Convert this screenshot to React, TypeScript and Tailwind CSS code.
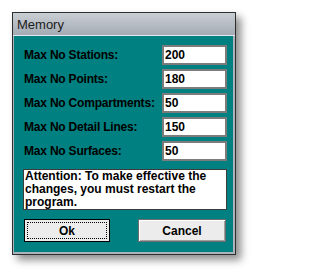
const fields = [
  { label: "Max No Stations:", value: "200" },
  { label: "Max No Points:", value: "180" },
  { label: "Max No Compartments:", value: "50" },
  { label: "Max No Detail Lines:", value: "150" },
  { label: "Max No Surfaces:", value: "50" },
];

export default function App() {
  return (
    <div className="w-[256px] h-[274px] bg-white pl-[12px] pt-[12px] font-['Liberation_Sans',Arial,sans-serif]">
      <div className="w-[224px] border border-[#2e2e2e] bg-[#aab3ba] shadow-[5px_5px_8px_rgba(0,0,0,0.45)]">
        {/* title bar */}
        <div className="h-[23px] flex items-center pl-[4px] bg-gradient-to-b from-[#c9ced3] to-[#a3abb3] border-b border-[#e4e8ec]">
          <span className="text-[13px] text-[#1c1c1c] leading-none pt-[1px]">Memory</span>
        </div>

        <div className="pl-[1px] pr-[2px] pb-[2px]">
          <div className="bg-[#008080] pl-[9px] pr-[6px] pt-[9px] pb-[10px] flex flex-col">
            <div className="flex flex-col gap-[4px]">
              {fields.map((f) => (
                <div key={f.label} className="flex items-center justify-between h-[20px]">
                  <span className="pl-[1px] text-[12px] font-bold text-black tracking-[-0.2px]">{f.label}</span>
                  <div className="w-[65px] h-[20px] border-2 border-[#7c7c7c] bg-white flex items-center pl-[1px]">
                    <span className="text-[12px] font-bold text-black leading-none">{f.value}</span>
                  </div>
                </div>
              ))}
            </div>

            <div className="mt-[8px] h-[41px] border border-[#3c3c3c] bg-white px-[1px] text-[12px] font-bold leading-[13px] text-black">
              Attention: To make effective the changes, you must restart the program.
            </div>

            <div className="mt-[9px] flex justify-between pr-[1px]">
              <button className="w-[86px] h-[23px] border border-black bg-[#ececec] p-[2px] ml-[1px]">
                <div className="w-full h-full border border-dotted border-black flex items-center justify-center text-[12px] font-bold text-black">
                  Ok
                </div>
              </button>
              <button className="w-[88px] h-[23px] border border-[#6e6e6e] bg-[#ececec] flex items-center justify-center text-[12px] font-bold text-black shadow-[inset_1px_1px_0_#ffffff,inset_-1px_-1px_0_#a0a0a0]">
                Cancel
              </button>
            </div>
          </div>
        </div>
      </div>
    </div>
  );
}
